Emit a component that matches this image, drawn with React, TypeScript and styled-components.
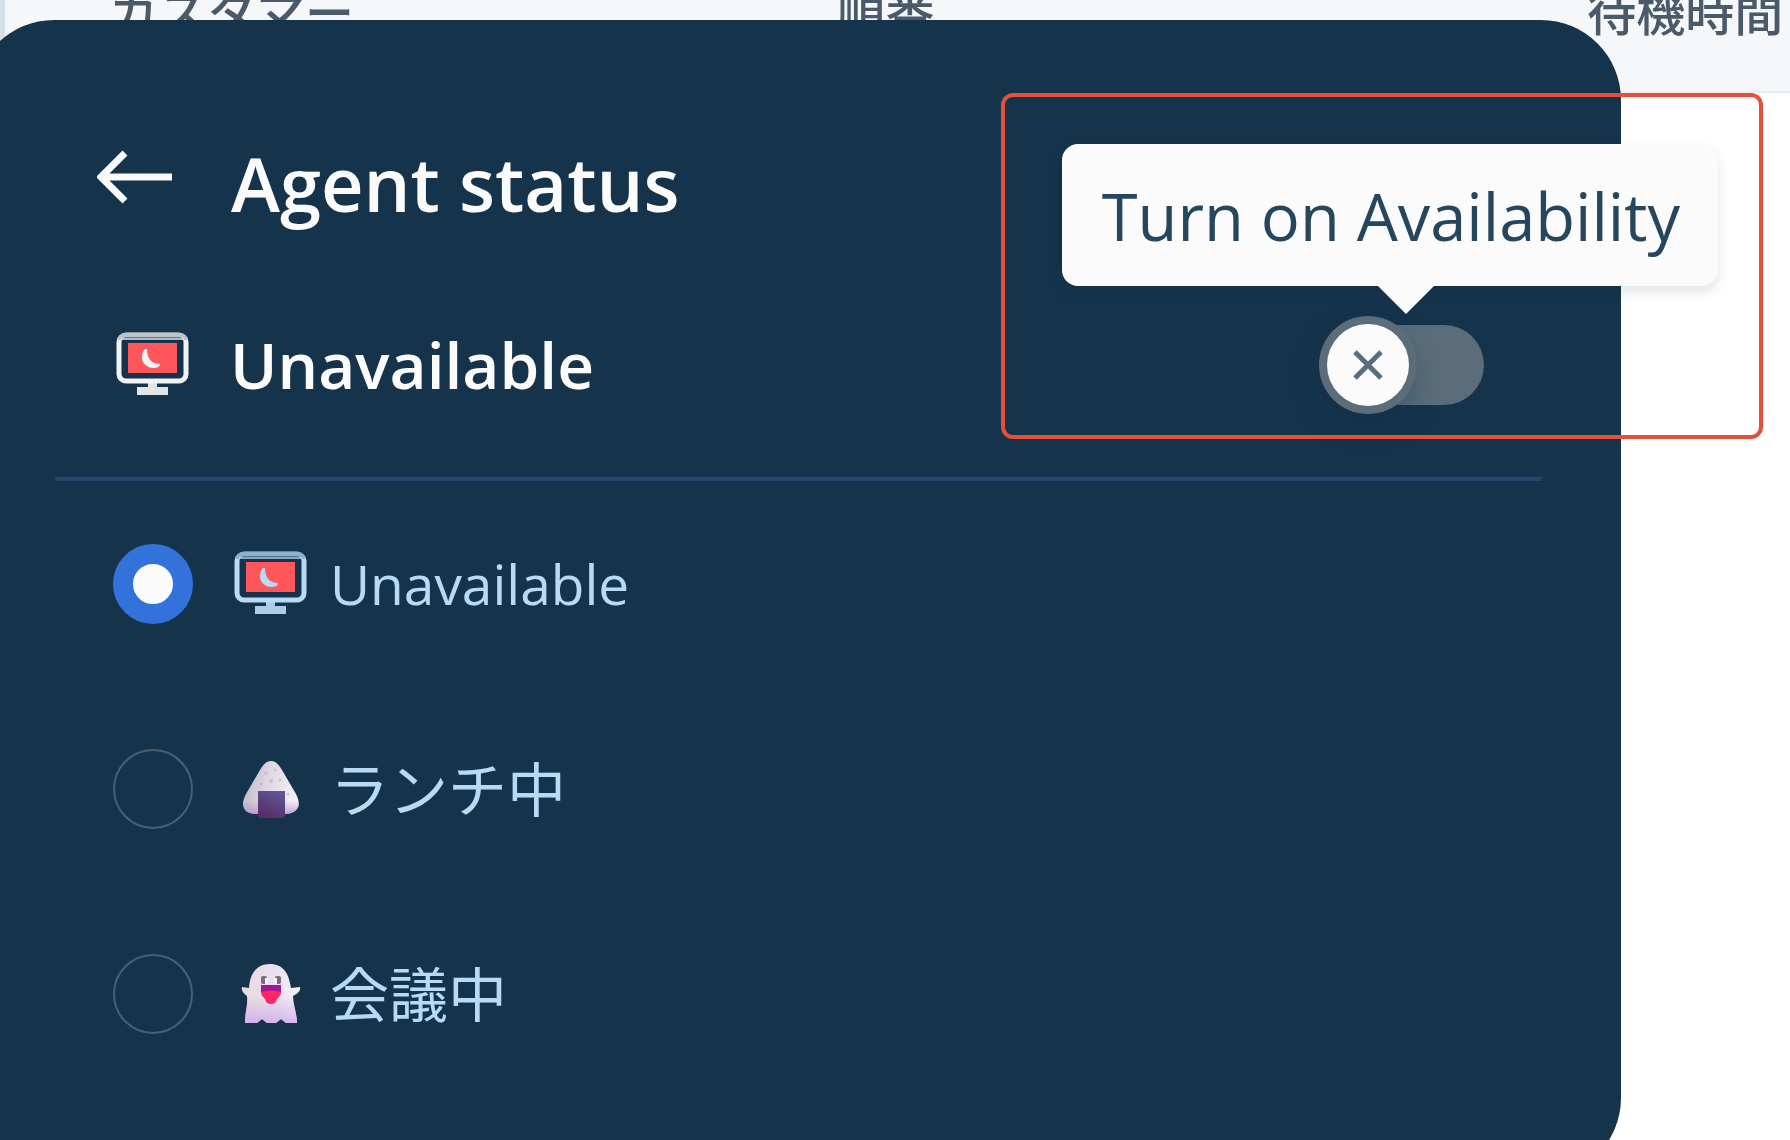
import React, { useState } from "react";
import styled, { createGlobalStyle } from "styled-components";

const navy = "#15344b";
const sky = "#b8daf5";
const paper = "#fbfbfb";

const GlobalStyle = createGlobalStyle`
  * { box-sizing: border-box; }
  html, body { margin: 0; background: #fff; }
  body, button, input {
    font-family: "Open Sans", "Noto Sans CJK JP", sans-serif;
  }
`;

const Page = styled.div`
  position: relative;
  height: 100vh;
  overflow: hidden;
  background: #fff;
`;

const QueueTable = styled.table`
  width: 100%;
  margin-top: -68px;
  border-collapse: collapse;
  table-layout: fixed;
`;

const QueueHead = styled.th<{ $width?: string }>`
  width: ${(p) => p.$width ?? "auto"};
  height: 160px;
  padding: 0;
  background: #f5f7f9;
  border-bottom: 2px solid #eaeef2;
  color: #4a5a68;
  font-size: 49px;
  font-weight: 500;
  line-height: 64px;
  text-align: left;
  white-space: nowrap;

  &:first-child {
    padding-left: 104px;
    border-left: 5px solid #d6e0e8;
  }
`;

const Panel = styled.section`
  position: absolute;
  top: 20px;
  right: 169px;
  bottom: -38px;
  left: -26px;
  padding: 95px 79px 0 81px;
  border-radius: 80px;
  background: ${navy};
`;

const TitleRow = styled.header`
  display: flex;
  align-items: center;
  height: 138px;
  padding-left: 42px;
  gap: 58px;
`;

const BackButton = styled.button`
  display: flex;
  padding: 0 0 14px;
  border: 0;
  background: none;
  cursor: pointer;
`;

const Title = styled.h1`
  margin: 0;
  color: ${paper};
  font-size: 74px;
  font-weight: 600;
  line-height: 96px;
`;

const CurrentRow = styled.div`
  display: flex;
  align-items: center;
  height: 228px;
  padding: 0 58px 0 61px;
  gap: 40px;
  border-bottom: 4px solid #24466a;
`;

const CurrentStatus = styled.h2`
  flex: 1;
  margin: 0;
  color: ${paper};
  font-size: 64px;
  font-weight: 600;
  line-height: 96px;
`;

const SwitchBox = styled.label`
  position: relative;
  display: flex;
  width: 156px;
  height: 80px;
  cursor: pointer;
`;

const SwitchInput = styled.input`
  appearance: none;
  width: 100%;
  height: 100%;
  margin: 0;
  border-radius: 40px;
  background: #5b6d7b;
  outline: none;
  cursor: pointer;
`;

const Thumb = styled.span<{ $on: boolean }>`
  position: absolute;
  top: -1px;
  left: ${(p) => (p.$on ? "76px" : "-1px")};
  display: flex;
  align-items: center;
  justify-content: center;
  width: 82px;
  height: 82px;
  border-radius: 50%;
  background: ${paper};
  box-shadow: 0 0 0 8px #5b6d7b, 0 12px 28px 4px rgba(16, 40, 64, 0.35);
`;

const Tooltip = styled.span`
  position: absolute;
  right: -234px;
  bottom: 119px;
  padding: 24px 38px 22px 40px;
  border-radius: 16px;
  background: ${paper};
  box-shadow: 0 6px 12px rgba(16, 36, 60, 0.12);
  color: #26465e;
  font-size: 65px;
  line-height: 96px;
  white-space: nowrap;

  &::after {
    content: "";
    position: absolute;
    top: 100%;
    right: 284px;
    border: 28px solid transparent;
    border-top-color: ${paper};
    border-bottom-width: 0;
  }
`;

const Highlight = styled.div`
  position: absolute;
  top: 93px;
  right: 27px;
  width: 762px;
  height: 346px;
  border: 4px solid #e5503b;
  border-radius: 12px;
  pointer-events: none;
`;

const Options = styled.fieldset`
  margin: 0;
  padding: 0 0 0 58px;
  border: 0;
`;

const Option = styled.label`
  display: flex;
  align-items: center;
  height: 205px;
  color: ${sky};
  font-size: 59px;
  line-height: 80px;
  cursor: pointer;

  &:lang(en) {
    font-size: 55px;
  }
`;

const Radio = styled.input`
  appearance: none;
  flex: none;
  width: 80px;
  height: 80px;
  margin: 0 41px 0 0;
  border: 2px solid #4c5f6e;
  border-radius: 50%;
  cursor: pointer;

  &:checked {
    border: 20px solid #3371db;
    background: ${paper};
  }
`;

const OptionIcon = styled.span`
  display: flex;
  justify-content: center;
  width: 74px;
  margin-right: 22px;
`;

function ArrowIcon() {
  return (
    <svg width="76" height="54" viewBox="0 0 76 54" fill="none" stroke={paper} strokeWidth="7">
      <path d="M75 27H6M28 3L4 27l24 24" />
    </svg>
  );
}

function MonitorIcon({ color }: { color: string }) {
  return (
    <svg width="74" height="66" viewBox="0 0 74 66">
      <rect x="3" y="3" width="67" height="46" rx="7" fill="none" stroke={color} strokeWidth="5" />
      <path d="M8 1h57q4 0 6 5v2H2V6q2-5 6-5z" fill={navy} opacity=".25" />
      <path d="M5 6h63v2H5z" fill={color} opacity=".7" />
      <rect x="12" y="11" width="49" height="30" fill="#ff565b" />
      <path d="M29 17c-6 7-3 18 8 19 4 0 7-1 7-4-8 0-13-5-13-15z" fill={color} />
      <path d="M32 50h9v5h11v8H21v-8h11z" fill={color} opacity=".92" />
    </svg>
  );
}

function RiceBallIcon() {
  return (
    <svg width="60" height="60" viewBox="0 0 60 60">
      <defs>
        <linearGradient id="rice" x1="0" y1="0" x2="1" y2="0.2">
          <stop offset="0" stopColor="#b9b3bd" />
          <stop offset=".5" stopColor="#dfd8e4" />
          <stop offset="1" stopColor="#f2edf5" />
        </linearGradient>
        <linearGradient id="riceFoot" x1="0" y1="0" x2="0" y2="1">
          <stop offset=".75" stopColor="#b78fd0" stopOpacity="0" />
          <stop offset="1" stopColor="#b78fd0" stopOpacity=".8" />
        </linearGradient>
        <linearGradient id="nori" x1=".7" y1="0" x2=".3" y2="1">
          <stop offset="0" stopColor="#5e5594" />
          <stop offset="1" stopColor="#582d68" />
        </linearGradient>
        <path
          id="riceBody"
          d="M30 2c5 0 8 4 11 9l14 24c3 6 4 11 1 15-3 4-8 5-14 5H18C11 55 5 54 3 49c-2-4-1-8 2-14l14-24c3-5 6-9 11-9z"
        />
      </defs>
      <use href="#riceBody" fill="url(#rice)" />
      <use href="#riceBody" fill="url(#riceFoot)" />
      <g fill="#b9aec3" opacity=".6">
        <circle cx="25" cy="14" r="1.5" />
        <circle cx="34" cy="11" r="1.5" />
        <circle cx="30" cy="22" r="2" />
        <circle cx="39" cy="21" r="1.5" />
        <circle cx="20" cy="25" r="1.5" />
        <circle cx="47" cy="35" r="1.5" />
      </g>
      <path d="M17 32h27v24q0 3-3 3H20q-3 0-3-3z" fill="url(#nori)" />
    </svg>
  );
}

function GhostIcon() {
  return (
    <svg width="60" height="60" viewBox="0 0 60 60">
      <defs>
        <linearGradient id="sheet" x1="0" y1="0" x2="1" y2="0">
          <stop offset="0" stopColor="#ead9dd" />
          <stop offset=".6" stopColor="#e9e0f0" />
          <stop offset="1" stopColor="#f7f2f8" />
        </linearGradient>
        <linearGradient id="hem" x1="0" y1="0" x2="0" y2="1">
          <stop offset=".55" stopColor="#cfa9ea" stopOpacity="0" />
          <stop offset="1" stopColor="#cfa9ea" stopOpacity=".8" />
        </linearGradient>
        <path
          id="ghostBody"
          d="M29 0c13 0 19 9 21 24l9-1c1 4-3 7-7 9 0 9 4 17 4 27H45l-5-4-5 4h-9l-5-4-5 4H4c0-11 3-18 2-27-3-2-6-5-5-9l7 1C9 9 16 0 29 0z"
        />
      </defs>
      <use href="#ghostBody" fill="url(#sheet)" />
      <use href="#ghostBody" fill="url(#hem)" />
      <rect x="20" y="12" width="6" height="8" rx="2" fill="#7b6b7e" />
      <rect x="34" y="12" width="6" height="8" rx="2" fill="#7b6b7e" />
      <rect x="24" y="14" width="3" height="6" fill="#f6f0f6" />
      <rect x="33" y="14" width="3" height="6" fill="#f6f0f6" />
      <path d="M20 21h20v7l-2 4H22l-2-4z" fill="#a3169a" />
      <path d="M20 28q10-3 20 0c0 3-2 5-4 7-1 4-3 5-6 5s-5-1-6-5c-2-2-4-4-4-7z" fill="#ff2865" />
    </svg>
  );
}

const statuses = [
  { id: "unavailable", lang: "en", label: "Unavailable", icon: <MonitorIcon color={sky} /> },
  { id: "lunch", lang: "ja", label: "ランチ中", icon: <RiceBallIcon /> },
  { id: "meeting", lang: "ja", label: "会議中", icon: <GhostIcon /> },
];

export default function App() {
  const [status, setStatus] = useState("unavailable");
  const [available, setAvailable] = useState(false);

  return (
    <Page lang="ja">
      <GlobalStyle />
      <QueueTable>
        <thead>
          <tr>
            <QueueHead $width="834px">カスタマー</QueueHead>
            <QueueHead $width="42%">順番</QueueHead>
            <QueueHead>待機時間</QueueHead>
          </tr>
        </thead>
      </QueueTable>

      <Panel>
        <TitleRow>
          <BackButton type="button" aria-label="Back">
            <ArrowIcon />
          </BackButton>
          <Title>Agent status</Title>
        </TitleRow>

        <CurrentRow>
          <MonitorIcon color="#f1f4f6" />
          <CurrentStatus>Unavailable</CurrentStatus>
          <SwitchBox>
            <SwitchInput
              type="checkbox"
              role="switch"
              checked={available}
              onChange={(e) => setAvailable(e.target.checked)}
            />
            <Thumb $on={available}>
              <svg width="30" height="30" viewBox="0 0 30 30" fill="none" stroke="#5b6d7b" strokeWidth="5">
                <path d="M2 2l26 26M28 2L2 28" />
              </svg>
            </Thumb>
            <Tooltip>Turn on Availability</Tooltip>
          </SwitchBox>
        </CurrentRow>

        <Options aria-label="Agent status">
          {statuses.map((s) => (
            <Option key={s.id} lang={s.lang}>
              <Radio
                type="radio"
                name="status"
                value={s.id}
                checked={status === s.id}
                onChange={() => setStatus(s.id)}
              />
              <OptionIcon>{s.icon}</OptionIcon>
              {s.label}
            </Option>
          ))}
        </Options>
      </Panel>

      <Highlight />
    </Page>
  );
}
